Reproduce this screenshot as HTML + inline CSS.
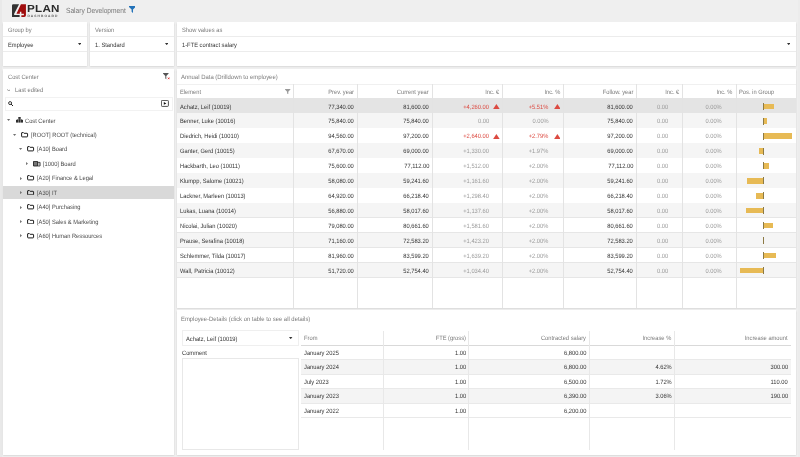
<!DOCTYPE html>
<html lang="en"><head><meta charset="utf-8"><title>Salary Development</title>
<style>
html,body{margin:0;padding:0;}
body{width:800px;height:457px;overflow:hidden;background:#efefef;position:relative;font-family:"Liberation Sans",sans-serif;}
#w{position:absolute;left:0;top:0;width:800px;height:457px;will-change:transform;}
#w>div,#w>svg{position:absolute;display:block;}
.t{white-space:nowrap;letter-spacing:0px;text-rendering:geometricPrecision;}
.panel{background:#fff;box-shadow:0 0.6px 1.6px rgba(0,0,0,0.16);}
</style></head><body><div id="w">
<div style="left:0px;top:0px;width:1.5px;height:457px;background:#e9e9e9"></div>
<svg style="left:12.2px;top:3.86px" width="13.94" height="13.2" viewBox="0 0 375 355"><path d="M0 350 V40 Q0 5 35 5 H190 L58 265 V295 H205 V350 Z" fill="#333"/><path d="M240 5 H375 V300 Q375 350 325 350 H252 V300 H320 V265 H252 V210 H212 V262 H120 Z" fill="#a00d0d"/></svg>
<div class="t" style="top:4.7px;height:10px;line-height:10px;font-size:10.3px;color:#2b2b2b;letter-spacing:0.25px;left:27.1px;transform:scaleX(1.13);transform-origin:0 50%;font-weight:bold;">PLAN</div>
<div class="t" style="top:11.1px;height:10px;line-height:10px;font-size:3.3px;color:#555;letter-spacing:1.06px;left:27.4px;font-weight:bold;">DASHBOARD</div>
<div class="t" style="top:6px;height:10px;line-height:10px;font-size:7.5px;color:#777;left:65.5px;transform:scaleX(0.885);transform-origin:0 50%;">Salary Development</div>
<svg style="left:128.5px;top:6.2px" width="6.6" height="6.9" viewBox="0 0 66 69"><path d="M0 0 H66 V9 L40 36 V69 L26 58 V36 L0 9 Z" fill="#2272b9"/></svg>
<div class="panel" style="left:3.2px;top:22px;width:84px;height:44px;"></div>
<div style="left:3.2px;top:36.3px;width:84px;height:0.7px;background:#ececec"></div>
<div style="left:3.2px;top:51px;width:84px;height:0.7px;background:#ececec"></div>
<div class="t" style="top:26px;height:10px;line-height:10px;font-size:6.25px;color:#7a7a7a;left:7.8px;transform:scaleX(0.92);transform-origin:0 50%;">Group by</div>
<div class="t" style="top:41px;height:10px;line-height:10px;font-size:6.25px;color:#333;left:7.8px;transform:scaleX(0.92);transform-origin:0 50%;">Employee</div>
<svg style="left:77.9px;top:43px" width="3.4" height="2.2" viewBox="0 0 34 22"><path d="M0 0 H34 L17 22 Z" fill="#333"/></svg>
<div class="panel" style="left:90px;top:22px;width:84px;height:44px;"></div>
<div style="left:90px;top:36.3px;width:84px;height:0.7px;background:#ececec"></div>
<div style="left:90px;top:51px;width:84px;height:0.7px;background:#ececec"></div>
<div class="t" style="top:26px;height:10px;line-height:10px;font-size:6.25px;color:#7a7a7a;left:94.6px;transform:scaleX(0.92);transform-origin:0 50%;">Version</div>
<div class="t" style="top:41px;height:10px;line-height:10px;font-size:6.25px;color:#333;left:94.6px;transform:scaleX(0.92);transform-origin:0 50%;">1. Standard</div>
<svg style="left:164.9px;top:43px" width="3.4" height="2.2" viewBox="0 0 34 22"><path d="M0 0 H34 L17 22 Z" fill="#333"/></svg>
<div class="panel" style="left:177px;top:22px;width:618.7px;height:44px;"></div>
<div style="left:177px;top:36.3px;width:618.7px;height:0.7px;background:#ececec"></div>
<div style="left:177px;top:51px;width:618.7px;height:0.7px;background:#ececec"></div>
<div class="t" style="top:26px;height:10px;line-height:10px;font-size:6.25px;color:#7a7a7a;left:181.6px;transform:scaleX(0.92);transform-origin:0 50%;">Show values as</div>
<div class="t" style="top:41px;height:10px;line-height:10px;font-size:6.25px;color:#333;left:181.6px;transform:scaleX(0.92);transform-origin:0 50%;">1-FTE contract salary</div>
<svg style="left:786.5px;top:43px" width="3.4" height="2.2" viewBox="0 0 34 22"><path d="M0 0 H34 L17 22 Z" fill="#333"/></svg>
<div class="panel" style="left:3.2px;top:69px;width:171.2px;height:386.3px;"></div>
<div class="t" style="top:73px;height:10px;line-height:10px;font-size:6.25px;color:#7a7a7a;left:7.8px;transform:scaleX(0.92);transform-origin:0 50%;">Cost Center</div>
<svg style="left:163px;top:73.3px" width="7" height="6.6" viewBox="0 0 70 66"><path d="M0 0 H56 V6 L33 30 V62 L23 56 V30 L0 6 Z" fill="#555"/><path d="M50 46 L64 62 M64 46 L50 62" stroke="#e02020" stroke-width="8" fill="none"/></svg>
<svg style="left:6.9px;top:88.6px" width="3.6" height="2.5" viewBox="0 0 36 25"><path d="M2 3 L18 21 L34 3" stroke="#666" stroke-width="6.5" fill="none"/></svg>
<div class="t" style="top:86px;height:10px;line-height:10px;font-size:6.25px;color:#7a7a7a;left:14.8px;transform:scaleX(0.92);transform-origin:0 50%;">Last edited</div>
<div style="left:5px;top:96.6px;width:167.8px;height:14.5px;background:#fff;border:0.6px solid #f2f2f2;box-sizing:border-box;"></div>
<svg style="left:7.7px;top:101px" width="5.6" height="5.6" viewBox="0 0 56 56"><circle cx="21" cy="21" r="15" stroke="#222" stroke-width="9" fill="none"/><path d="M32 32 L51 51" stroke="#222" stroke-width="10" stroke-linecap="round"/></svg>
<svg style="left:161.2px;top:100.1px" width="7.8" height="6.8" viewBox="0 0 78 68"><rect x="4" y="4" width="70" height="60" rx="8" stroke="#222" stroke-width="8" fill="none"/><path d="M28 20 L54 34 L28 48 Z" fill="#111"/></svg>
<svg style="left:7.4px;top:119.4px" width="3.2" height="2" viewBox="0 0 32 20"><path d="M0 0 H32 L16 20 Z" fill="#707070"/></svg>
<svg style="left:15.7px;top:117.4px" width="7" height="5.6" viewBox="0 0 55 44"><rect x="18" y="0" width="19" height="15" fill="#2e2e2e"/><rect x="24.5" y="15" width="6" height="8" fill="#2e2e2e"/><rect x="6" y="19" width="43" height="5" fill="#2e2e2e"/><rect x="0" y="23" width="17" height="21" fill="#2e2e2e"/><rect x="19" y="23" width="17" height="21" fill="#2e2e2e"/><rect x="38" y="23" width="17" height="21" fill="#2e2e2e"/></svg>
<div class="t" style="top:117px;height:10px;line-height:10px;font-size:6.25px;color:#4a4a4a;left:25px;transform:scaleX(0.915);transform-origin:0 50%;">Cost Center</div>
<svg style="left:13.4px;top:133.87px" width="3.2" height="2" viewBox="0 0 32 20"><path d="M0 0 H32 L16 20 Z" fill="#707070"/></svg>
<svg style="left:21.35px;top:132.02px" width="7.2" height="5.5" viewBox="0 0 72 55"><path d="M10 6 H24 L31 13 H60 Q66 13 66 19 V43 Q66 49 60 49 H12 Q6 49 6 43 V10 Q6 6 10 6 Z" stroke="#1c1c1c" stroke-width="10" fill="none" stroke-linejoin="round"/></svg>
<div class="t" style="top:131px;height:10px;line-height:10px;font-size:6.25px;color:#4a4a4a;left:31px;transform:scaleX(0.915);transform-origin:0 50%;">[ROOT] ROOT (technical)</div>
<svg style="left:19.4px;top:148.34px" width="3.2" height="2" viewBox="0 0 32 20"><path d="M0 0 H32 L16 20 Z" fill="#707070"/></svg>
<svg style="left:27.35px;top:146.49px" width="7.2" height="5.5" viewBox="0 0 72 55"><path d="M10 6 H24 L31 13 H60 Q66 13 66 19 V43 Q66 49 60 49 H12 Q6 49 6 43 V10 Q6 6 10 6 Z" stroke="#1c1c1c" stroke-width="10" fill="none" stroke-linejoin="round"/></svg>
<div class="t" style="top:145px;height:10px;line-height:10px;font-size:6.25px;color:#4a4a4a;left:37px;transform:scaleX(0.915);transform-origin:0 50%;">[A10] Board</div>
<svg style="left:26.4px;top:162.11px" width="2" height="3.2" viewBox="0 0 20 32"><path d="M0 0 V32 L20 16 Z" fill="#777"/></svg>
<svg style="left:33.2px;top:160.81px" width="7.7" height="5.8" viewBox="0 0 77 58"><path d="M5 4 H46 V50 H5 Z" stroke="#222" stroke-width="9" fill="#777" stroke-linejoin="round"/><path d="M46 14 H71 V50 H46" stroke="#222" stroke-width="8" fill="none" stroke-linejoin="round"/><path d="M54 26 H66 M54 38 H66" stroke="#222" stroke-width="5"/></svg>
<div class="t" style="top:160px;height:10px;line-height:10px;font-size:6.25px;color:#4a4a4a;left:43px;transform:scaleX(0.915);transform-origin:0 50%;">[1000] Board</div>
<svg style="left:20.4px;top:176.58px" width="2" height="3.2" viewBox="0 0 20 32"><path d="M0 0 V32 L20 16 Z" fill="#777"/></svg>
<svg style="left:27.35px;top:175.43px" width="7.2" height="5.5" viewBox="0 0 72 55"><path d="M10 6 H24 L31 13 H60 Q66 13 66 19 V43 Q66 49 60 49 H12 Q6 49 6 43 V10 Q6 6 10 6 Z" stroke="#1c1c1c" stroke-width="10" fill="none" stroke-linejoin="round"/></svg>
<div class="t" style="top:174px;height:10px;line-height:10px;font-size:6.25px;color:#4a4a4a;left:37px;transform:scaleX(0.915);transform-origin:0 50%;">[A20] Finance &amp; Legal</div>
<div style="left:3.2px;top:185.75px;width:171.2px;height:13.6px;background:#d9d9d9"></div>
<svg style="left:20.4px;top:191.05px" width="2" height="3.2" viewBox="0 0 20 32"><path d="M0 0 V32 L20 16 Z" fill="#777"/></svg>
<svg style="left:27.35px;top:189.9px" width="7.2" height="5.5" viewBox="0 0 72 55"><path d="M10 6 H24 L31 13 H60 Q66 13 66 19 V43 Q66 49 60 49 H12 Q6 49 6 43 V10 Q6 6 10 6 Z" stroke="#1c1c1c" stroke-width="10" fill="none" stroke-linejoin="round"/></svg>
<div class="t" style="top:189px;height:10px;line-height:10px;font-size:6.25px;color:#4a4a4a;left:37px;transform:scaleX(0.915);transform-origin:0 50%;">[A30] IT</div>
<svg style="left:20.4px;top:205.52px" width="2" height="3.2" viewBox="0 0 20 32"><path d="M0 0 V32 L20 16 Z" fill="#777"/></svg>
<svg style="left:27.35px;top:204.37px" width="7.2" height="5.5" viewBox="0 0 72 55"><path d="M10 6 H24 L31 13 H60 Q66 13 66 19 V43 Q66 49 60 49 H12 Q6 49 6 43 V10 Q6 6 10 6 Z" stroke="#1c1c1c" stroke-width="10" fill="none" stroke-linejoin="round"/></svg>
<div class="t" style="top:203px;height:10px;line-height:10px;font-size:6.25px;color:#4a4a4a;left:37px;transform:scaleX(0.915);transform-origin:0 50%;">[A40] Purchasing</div>
<svg style="left:20.4px;top:219.99px" width="2" height="3.2" viewBox="0 0 20 32"><path d="M0 0 V32 L20 16 Z" fill="#777"/></svg>
<svg style="left:27.35px;top:218.84px" width="7.2" height="5.5" viewBox="0 0 72 55"><path d="M10 6 H24 L31 13 H60 Q66 13 66 19 V43 Q66 49 60 49 H12 Q6 49 6 43 V10 Q6 6 10 6 Z" stroke="#1c1c1c" stroke-width="10" fill="none" stroke-linejoin="round"/></svg>
<div class="t" style="top:218px;height:10px;line-height:10px;font-size:6.25px;color:#4a4a4a;left:37px;transform:scaleX(0.915);transform-origin:0 50%;">[A50] Sales &amp; Marketing</div>
<svg style="left:20.4px;top:234.46px" width="2" height="3.2" viewBox="0 0 20 32"><path d="M0 0 V32 L20 16 Z" fill="#777"/></svg>
<svg style="left:27.35px;top:233.31px" width="7.2" height="5.5" viewBox="0 0 72 55"><path d="M10 6 H24 L31 13 H60 Q66 13 66 19 V43 Q66 49 60 49 H12 Q6 49 6 43 V10 Q6 6 10 6 Z" stroke="#1c1c1c" stroke-width="10" fill="none" stroke-linejoin="round"/></svg>
<div class="t" style="top:232px;height:10px;line-height:10px;font-size:6.25px;color:#4a4a4a;left:37px;transform:scaleX(0.915);transform-origin:0 50%;">[A60] Human Ressources</div>
<div class="panel" style="left:177px;top:69px;width:618.7px;height:239px;"></div>
<div class="t" style="top:73px;height:10px;line-height:10px;font-size:6.25px;color:#7a7a7a;left:181px;transform:scaleX(0.95);transform-origin:0 50%;">Annual Data (Drilldown to employee)</div>
<div style="left:177px;top:83.5px;width:618.7px;height:0.6px;background:#f0f0f0"></div>
<div style="left:177px;top:97.6px;width:618.7px;height:0.8px;background:#dcdcdc"></div>
<div style="left:177px;top:98.1px;width:618.7px;height:15.225px;background:#e4e4e4"></div>
<div style="left:177px;top:112.975px;width:618.7px;height:0.7px;background:#e6e6e6"></div>
<div style="left:177px;top:113.325px;width:618.7px;height:14.925px;background:#f5f5f5"></div>
<div style="left:177px;top:127.9px;width:618.7px;height:0.7px;background:#e6e6e6"></div>
<div style="left:177px;top:128.25px;width:618.7px;height:14.925px;background:#fff"></div>
<div style="left:177px;top:142.825px;width:618.7px;height:0.7px;background:#e6e6e6"></div>
<div style="left:177px;top:143.175px;width:618.7px;height:14.925px;background:#f5f5f5"></div>
<div style="left:177px;top:157.75px;width:618.7px;height:0.7px;background:#e6e6e6"></div>
<div style="left:177px;top:158.1px;width:618.7px;height:14.925px;background:#fff"></div>
<div style="left:177px;top:172.675px;width:618.7px;height:0.7px;background:#e6e6e6"></div>
<div style="left:177px;top:173.025px;width:618.7px;height:14.925px;background:#f5f5f5"></div>
<div style="left:177px;top:187.6px;width:618.7px;height:0.7px;background:#e6e6e6"></div>
<div style="left:177px;top:187.95px;width:618.7px;height:14.925px;background:#fff"></div>
<div style="left:177px;top:202.525px;width:618.7px;height:0.7px;background:#e6e6e6"></div>
<div style="left:177px;top:202.875px;width:618.7px;height:14.925px;background:#f5f5f5"></div>
<div style="left:177px;top:217.45px;width:618.7px;height:0.7px;background:#e6e6e6"></div>
<div style="left:177px;top:217.8px;width:618.7px;height:14.925px;background:#fff"></div>
<div style="left:177px;top:232.375px;width:618.7px;height:0.7px;background:#e6e6e6"></div>
<div style="left:177px;top:232.725px;width:618.7px;height:14.925px;background:#f5f5f5"></div>
<div style="left:177px;top:247.3px;width:618.7px;height:0.7px;background:#e6e6e6"></div>
<div style="left:177px;top:247.65px;width:618.7px;height:14.925px;background:#fff"></div>
<div style="left:177px;top:262.225px;width:618.7px;height:0.7px;background:#e6e6e6"></div>
<div style="left:177px;top:262.575px;width:618.7px;height:14.925px;background:#f5f5f5"></div>
<div style="left:177px;top:277.15px;width:618.7px;height:0.7px;background:#e6e6e6"></div>
<div style="left:293.15px;top:83.5px;width:0.7px;height:224.5px;background:#e3e3e3"></div>
<div style="left:357.15px;top:83.5px;width:0.7px;height:224.5px;background:#e3e3e3"></div>
<div style="left:432.15px;top:83.5px;width:0.7px;height:224.5px;background:#e3e3e3"></div>
<div style="left:502.15px;top:83.5px;width:0.7px;height:224.5px;background:#e3e3e3"></div>
<div style="left:563.15px;top:83.5px;width:0.7px;height:224.5px;background:#e3e3e3"></div>
<div style="left:636.15px;top:83.5px;width:0.7px;height:224.5px;background:#e3e3e3"></div>
<div style="left:682.15px;top:83.5px;width:0.7px;height:224.5px;background:#e3e3e3"></div>
<div style="left:735.65px;top:83.5px;width:0.7px;height:224.5px;background:#e3e3e3"></div>
<div class="t" style="top:88px;height:10px;line-height:10px;font-size:6.25px;color:#7a7a7a;left:180.2px;transform:scaleX(0.92);transform-origin:0 50%;">Element</div>
<svg style="left:285.4px;top:88.9px" width="5.4" height="5.2" viewBox="0 0 54 52"><path d="M0 0 H54 V6 L33 28 V52 L21 44 V28 L0 6 Z" fill="#999"/></svg>
<div class="t" style="top:88px;height:10px;line-height:10px;font-size:6.25px;color:#7a7a7a;right:446px;text-align:right;transform:scaleX(0.92);transform-origin:100% 50%;">Prev. year</div>
<div class="t" style="top:88px;height:10px;line-height:10px;font-size:6.25px;color:#7a7a7a;right:371px;text-align:right;transform:scaleX(0.92);transform-origin:100% 50%;">Current year</div>
<div class="t" style="top:88px;height:10px;line-height:10px;font-size:6.25px;color:#7a7a7a;right:300.7px;text-align:right;transform:scaleX(0.92);transform-origin:100% 50%;">Inc. €</div>
<div class="t" style="top:88px;height:10px;line-height:10px;font-size:6.25px;color:#7a7a7a;right:240px;text-align:right;transform:scaleX(0.92);transform-origin:100% 50%;">Inc. %</div>
<div class="t" style="top:88px;height:10px;line-height:10px;font-size:6.25px;color:#7a7a7a;right:167px;text-align:right;transform:scaleX(0.92);transform-origin:100% 50%;">Follow. year</div>
<div class="t" style="top:88px;height:10px;line-height:10px;font-size:6.25px;color:#7a7a7a;right:121px;text-align:right;transform:scaleX(0.92);transform-origin:100% 50%;">Inc. €</div>
<div class="t" style="top:88px;height:10px;line-height:10px;font-size:6.25px;color:#7a7a7a;right:67.5px;text-align:right;transform:scaleX(0.92);transform-origin:100% 50%;">Inc. %</div>
<div class="t" style="top:88px;height:10px;line-height:10px;font-size:6.25px;color:#7a7a7a;left:739px;transform:scaleX(0.92);transform-origin:0 50%;">Pos. in Group</div>
<div class="t" style="top:103px;height:10px;line-height:10px;font-size:6.25px;color:#333;left:180.2px;transform:scaleX(0.92);transform-origin:0 50%;">Achatz, Leif (10019)</div>
<div class="t" style="top:103px;height:10px;line-height:10px;font-size:6.25px;color:#333;right:446px;text-align:right;transform:scaleX(0.92);transform-origin:100% 50%;">77,340.00</div>
<div class="t" style="top:103px;height:10px;line-height:10px;font-size:6.25px;color:#333;right:371px;text-align:right;transform:scaleX(0.92);transform-origin:100% 50%;">81,600.00</div>
<div class="t" style="top:103px;height:10px;line-height:10px;font-size:6.25px;color:#dc4a41;right:311.2px;text-align:right;transform:scaleX(0.92);transform-origin:100% 50%;">+4,260.00</div>
<div class="t" style="top:103px;height:10px;line-height:10px;font-size:6.25px;color:#dc4a41;right:251.2px;text-align:right;transform:scaleX(0.92);transform-origin:100% 50%;">+5.51%</div>
<svg style="left:492.9px;top:103.663px" width="6.8" height="5.2" viewBox="0 0 68 52"><path d="M34 0 L68 52 H0 Z" fill="#dc4a41"/></svg>
<svg style="left:553.7px;top:103.663px" width="6.8" height="5.2" viewBox="0 0 68 52"><path d="M34 0 L68 52 H0 Z" fill="#dc4a41"/></svg>
<div class="t" style="top:103px;height:10px;line-height:10px;font-size:6.25px;color:#333;right:167px;text-align:right;transform:scaleX(0.92);transform-origin:100% 50%;">81,600.00</div>
<div class="t" style="top:103px;height:10px;line-height:10px;font-size:6.25px;color:#9a9a9a;right:132.2px;text-align:right;transform:scaleX(0.92);transform-origin:100% 50%;">0.00</div>
<div class="t" style="top:103px;height:10px;line-height:10px;font-size:6.25px;color:#9a9a9a;right:78.2px;text-align:right;transform:scaleX(0.92);transform-origin:100% 50%;">0.00%</div>
<div style="left:763.4px;top:103.563px;width:10.3px;height:5.4px;background:#e7ba55"></div>
<div style="left:763px;top:102.763px;width:0.8px;height:7px;background:#8c7a45"></div>
<div class="t" style="top:117px;height:10px;line-height:10px;font-size:6.25px;color:#333;left:180.2px;transform:scaleX(0.92);transform-origin:0 50%;">Benner, Luke (10016)</div>
<div class="t" style="top:117px;height:10px;line-height:10px;font-size:6.25px;color:#333;right:446px;text-align:right;transform:scaleX(0.92);transform-origin:100% 50%;">75,840.00</div>
<div class="t" style="top:117px;height:10px;line-height:10px;font-size:6.25px;color:#333;right:371px;text-align:right;transform:scaleX(0.92);transform-origin:100% 50%;">75,840.00</div>
<div class="t" style="top:117px;height:10px;line-height:10px;font-size:6.25px;color:#9a9a9a;right:311.2px;text-align:right;transform:scaleX(0.92);transform-origin:100% 50%;">0.00</div>
<div class="t" style="top:117px;height:10px;line-height:10px;font-size:6.25px;color:#9a9a9a;right:251.2px;text-align:right;transform:scaleX(0.92);transform-origin:100% 50%;">0.00%</div>
<div class="t" style="top:117px;height:10px;line-height:10px;font-size:6.25px;color:#333;right:167px;text-align:right;transform:scaleX(0.92);transform-origin:100% 50%;">75,840.00</div>
<div class="t" style="top:117px;height:10px;line-height:10px;font-size:6.25px;color:#9a9a9a;right:132.2px;text-align:right;transform:scaleX(0.92);transform-origin:100% 50%;">0.00</div>
<div class="t" style="top:117px;height:10px;line-height:10px;font-size:6.25px;color:#9a9a9a;right:78.2px;text-align:right;transform:scaleX(0.92);transform-origin:100% 50%;">0.00%</div>
<div style="left:763.4px;top:118.488px;width:3.8px;height:5.4px;background:#e7ba55"></div>
<div style="left:763px;top:117.688px;width:0.8px;height:7px;background:#8c7a45"></div>
<div class="t" style="top:132px;height:10px;line-height:10px;font-size:6.25px;color:#333;left:180.2px;transform:scaleX(0.92);transform-origin:0 50%;">Diedrich, Heidi (10010)</div>
<div class="t" style="top:132px;height:10px;line-height:10px;font-size:6.25px;color:#333;right:446px;text-align:right;transform:scaleX(0.92);transform-origin:100% 50%;">94,560.00</div>
<div class="t" style="top:132px;height:10px;line-height:10px;font-size:6.25px;color:#333;right:371px;text-align:right;transform:scaleX(0.92);transform-origin:100% 50%;">97,200.00</div>
<div class="t" style="top:132px;height:10px;line-height:10px;font-size:6.25px;color:#dc4a41;right:311.2px;text-align:right;transform:scaleX(0.92);transform-origin:100% 50%;">+2,640.00</div>
<div class="t" style="top:132px;height:10px;line-height:10px;font-size:6.25px;color:#dc4a41;right:251.2px;text-align:right;transform:scaleX(0.92);transform-origin:100% 50%;">+2.79%</div>
<svg style="left:492.9px;top:133.513px" width="6.8" height="5.2" viewBox="0 0 68 52"><path d="M34 0 L68 52 H0 Z" fill="#dc4a41"/></svg>
<svg style="left:553.7px;top:133.513px" width="6.8" height="5.2" viewBox="0 0 68 52"><path d="M34 0 L68 52 H0 Z" fill="#dc4a41"/></svg>
<div class="t" style="top:132px;height:10px;line-height:10px;font-size:6.25px;color:#333;right:167px;text-align:right;transform:scaleX(0.92);transform-origin:100% 50%;">97,200.00</div>
<div class="t" style="top:132px;height:10px;line-height:10px;font-size:6.25px;color:#9a9a9a;right:132.2px;text-align:right;transform:scaleX(0.92);transform-origin:100% 50%;">0.00</div>
<div class="t" style="top:132px;height:10px;line-height:10px;font-size:6.25px;color:#9a9a9a;right:78.2px;text-align:right;transform:scaleX(0.92);transform-origin:100% 50%;">0.00%</div>
<div style="left:763.4px;top:133.413px;width:28.8px;height:5.4px;background:#e7ba55"></div>
<div style="left:763px;top:132.613px;width:0.8px;height:7px;background:#8c7a45"></div>
<div class="t" style="top:147px;height:10px;line-height:10px;font-size:6.25px;color:#333;left:180.2px;transform:scaleX(0.92);transform-origin:0 50%;">Ganter, Gerd (10015)</div>
<div class="t" style="top:147px;height:10px;line-height:10px;font-size:6.25px;color:#333;right:446px;text-align:right;transform:scaleX(0.92);transform-origin:100% 50%;">67,670.00</div>
<div class="t" style="top:147px;height:10px;line-height:10px;font-size:6.25px;color:#333;right:371px;text-align:right;transform:scaleX(0.92);transform-origin:100% 50%;">69,000.00</div>
<div class="t" style="top:147px;height:10px;line-height:10px;font-size:6.25px;color:#9a9a9a;right:311.2px;text-align:right;transform:scaleX(0.92);transform-origin:100% 50%;">+1,330.00</div>
<div class="t" style="top:147px;height:10px;line-height:10px;font-size:6.25px;color:#9a9a9a;right:251.2px;text-align:right;transform:scaleX(0.92);transform-origin:100% 50%;">+1.97%</div>
<div class="t" style="top:147px;height:10px;line-height:10px;font-size:6.25px;color:#333;right:167px;text-align:right;transform:scaleX(0.92);transform-origin:100% 50%;">69,000.00</div>
<div class="t" style="top:147px;height:10px;line-height:10px;font-size:6.25px;color:#9a9a9a;right:132.2px;text-align:right;transform:scaleX(0.92);transform-origin:100% 50%;">0.00</div>
<div class="t" style="top:147px;height:10px;line-height:10px;font-size:6.25px;color:#9a9a9a;right:78.2px;text-align:right;transform:scaleX(0.92);transform-origin:100% 50%;">0.00%</div>
<div style="left:758.8px;top:148.338px;width:4.6px;height:5.4px;background:#e7ba55"></div>
<div style="left:763px;top:147.538px;width:0.8px;height:7px;background:#8c7a45"></div>
<div class="t" style="top:162px;height:10px;line-height:10px;font-size:6.25px;color:#333;left:180.2px;transform:scaleX(0.92);transform-origin:0 50%;">Hackbarth, Leo (10011)</div>
<div class="t" style="top:162px;height:10px;line-height:10px;font-size:6.25px;color:#333;right:446px;text-align:right;transform:scaleX(0.92);transform-origin:100% 50%;">75,600.00</div>
<div class="t" style="top:162px;height:10px;line-height:10px;font-size:6.25px;color:#333;right:371px;text-align:right;transform:scaleX(0.92);transform-origin:100% 50%;">77,112.00</div>
<div class="t" style="top:162px;height:10px;line-height:10px;font-size:6.25px;color:#9a9a9a;right:311.2px;text-align:right;transform:scaleX(0.92);transform-origin:100% 50%;">+1,512.00</div>
<div class="t" style="top:162px;height:10px;line-height:10px;font-size:6.25px;color:#9a9a9a;right:251.2px;text-align:right;transform:scaleX(0.92);transform-origin:100% 50%;">+2.00%</div>
<div class="t" style="top:162px;height:10px;line-height:10px;font-size:6.25px;color:#333;right:167px;text-align:right;transform:scaleX(0.92);transform-origin:100% 50%;">77,112.00</div>
<div class="t" style="top:162px;height:10px;line-height:10px;font-size:6.25px;color:#9a9a9a;right:132.2px;text-align:right;transform:scaleX(0.92);transform-origin:100% 50%;">0.00</div>
<div class="t" style="top:162px;height:10px;line-height:10px;font-size:6.25px;color:#9a9a9a;right:78.2px;text-align:right;transform:scaleX(0.92);transform-origin:100% 50%;">0.00%</div>
<div style="left:763.4px;top:163.263px;width:5.3px;height:5.4px;background:#e7ba55"></div>
<div style="left:763px;top:162.463px;width:0.8px;height:7px;background:#8c7a45"></div>
<div class="t" style="top:177px;height:10px;line-height:10px;font-size:6.25px;color:#333;left:180.2px;transform:scaleX(0.92);transform-origin:0 50%;">Klumpp, Salome (10021)</div>
<div class="t" style="top:177px;height:10px;line-height:10px;font-size:6.25px;color:#333;right:446px;text-align:right;transform:scaleX(0.92);transform-origin:100% 50%;">58,080.00</div>
<div class="t" style="top:177px;height:10px;line-height:10px;font-size:6.25px;color:#333;right:371px;text-align:right;transform:scaleX(0.92);transform-origin:100% 50%;">59,241.60</div>
<div class="t" style="top:177px;height:10px;line-height:10px;font-size:6.25px;color:#9a9a9a;right:311.2px;text-align:right;transform:scaleX(0.92);transform-origin:100% 50%;">+1,161.60</div>
<div class="t" style="top:177px;height:10px;line-height:10px;font-size:6.25px;color:#9a9a9a;right:251.2px;text-align:right;transform:scaleX(0.92);transform-origin:100% 50%;">+2.00%</div>
<div class="t" style="top:177px;height:10px;line-height:10px;font-size:6.25px;color:#333;right:167px;text-align:right;transform:scaleX(0.92);transform-origin:100% 50%;">59,241.60</div>
<div class="t" style="top:177px;height:10px;line-height:10px;font-size:6.25px;color:#9a9a9a;right:132.2px;text-align:right;transform:scaleX(0.92);transform-origin:100% 50%;">0.00</div>
<div class="t" style="top:177px;height:10px;line-height:10px;font-size:6.25px;color:#9a9a9a;right:78.2px;text-align:right;transform:scaleX(0.92);transform-origin:100% 50%;">0.00%</div>
<div style="left:747.2px;top:178.188px;width:16.2px;height:5.4px;background:#e7ba55"></div>
<div style="left:763px;top:177.388px;width:0.8px;height:7px;background:#8c7a45"></div>
<div class="t" style="top:192px;height:10px;line-height:10px;font-size:6.25px;color:#333;left:180.2px;transform:scaleX(0.92);transform-origin:0 50%;">Lackner, Marleen (10013)</div>
<div class="t" style="top:192px;height:10px;line-height:10px;font-size:6.25px;color:#333;right:446px;text-align:right;transform:scaleX(0.92);transform-origin:100% 50%;">64,920.00</div>
<div class="t" style="top:192px;height:10px;line-height:10px;font-size:6.25px;color:#333;right:371px;text-align:right;transform:scaleX(0.92);transform-origin:100% 50%;">66,218.40</div>
<div class="t" style="top:192px;height:10px;line-height:10px;font-size:6.25px;color:#9a9a9a;right:311.2px;text-align:right;transform:scaleX(0.92);transform-origin:100% 50%;">+1,298.40</div>
<div class="t" style="top:192px;height:10px;line-height:10px;font-size:6.25px;color:#9a9a9a;right:251.2px;text-align:right;transform:scaleX(0.92);transform-origin:100% 50%;">+2.00%</div>
<div class="t" style="top:192px;height:10px;line-height:10px;font-size:6.25px;color:#333;right:167px;text-align:right;transform:scaleX(0.92);transform-origin:100% 50%;">66,218.40</div>
<div class="t" style="top:192px;height:10px;line-height:10px;font-size:6.25px;color:#9a9a9a;right:132.2px;text-align:right;transform:scaleX(0.92);transform-origin:100% 50%;">0.00</div>
<div class="t" style="top:192px;height:10px;line-height:10px;font-size:6.25px;color:#9a9a9a;right:78.2px;text-align:right;transform:scaleX(0.92);transform-origin:100% 50%;">0.00%</div>
<div style="left:755.9px;top:193.113px;width:7.5px;height:5.4px;background:#e7ba55"></div>
<div style="left:763px;top:192.313px;width:0.8px;height:7px;background:#8c7a45"></div>
<div class="t" style="top:207px;height:10px;line-height:10px;font-size:6.25px;color:#333;left:180.2px;transform:scaleX(0.92);transform-origin:0 50%;">Lukas, Luana (10014)</div>
<div class="t" style="top:207px;height:10px;line-height:10px;font-size:6.25px;color:#333;right:446px;text-align:right;transform:scaleX(0.92);transform-origin:100% 50%;">56,880.00</div>
<div class="t" style="top:207px;height:10px;line-height:10px;font-size:6.25px;color:#333;right:371px;text-align:right;transform:scaleX(0.92);transform-origin:100% 50%;">58,017.60</div>
<div class="t" style="top:207px;height:10px;line-height:10px;font-size:6.25px;color:#9a9a9a;right:311.2px;text-align:right;transform:scaleX(0.92);transform-origin:100% 50%;">+1,137.60</div>
<div class="t" style="top:207px;height:10px;line-height:10px;font-size:6.25px;color:#9a9a9a;right:251.2px;text-align:right;transform:scaleX(0.92);transform-origin:100% 50%;">+2.00%</div>
<div class="t" style="top:207px;height:10px;line-height:10px;font-size:6.25px;color:#333;right:167px;text-align:right;transform:scaleX(0.92);transform-origin:100% 50%;">58,017.60</div>
<div class="t" style="top:207px;height:10px;line-height:10px;font-size:6.25px;color:#9a9a9a;right:132.2px;text-align:right;transform:scaleX(0.92);transform-origin:100% 50%;">0.00</div>
<div class="t" style="top:207px;height:10px;line-height:10px;font-size:6.25px;color:#9a9a9a;right:78.2px;text-align:right;transform:scaleX(0.92);transform-origin:100% 50%;">0.00%</div>
<div style="left:746px;top:208.038px;width:17.4px;height:5.4px;background:#e7ba55"></div>
<div style="left:763px;top:207.238px;width:0.8px;height:7px;background:#8c7a45"></div>
<div class="t" style="top:222px;height:10px;line-height:10px;font-size:6.25px;color:#333;left:180.2px;transform:scaleX(0.92);transform-origin:0 50%;">Nicolai, Julian (10020)</div>
<div class="t" style="top:222px;height:10px;line-height:10px;font-size:6.25px;color:#333;right:446px;text-align:right;transform:scaleX(0.92);transform-origin:100% 50%;">79,080.00</div>
<div class="t" style="top:222px;height:10px;line-height:10px;font-size:6.25px;color:#333;right:371px;text-align:right;transform:scaleX(0.92);transform-origin:100% 50%;">80,661.60</div>
<div class="t" style="top:222px;height:10px;line-height:10px;font-size:6.25px;color:#9a9a9a;right:311.2px;text-align:right;transform:scaleX(0.92);transform-origin:100% 50%;">+1,581.60</div>
<div class="t" style="top:222px;height:10px;line-height:10px;font-size:6.25px;color:#9a9a9a;right:251.2px;text-align:right;transform:scaleX(0.92);transform-origin:100% 50%;">+2.00%</div>
<div class="t" style="top:222px;height:10px;line-height:10px;font-size:6.25px;color:#333;right:167px;text-align:right;transform:scaleX(0.92);transform-origin:100% 50%;">80,661.60</div>
<div class="t" style="top:222px;height:10px;line-height:10px;font-size:6.25px;color:#9a9a9a;right:132.2px;text-align:right;transform:scaleX(0.92);transform-origin:100% 50%;">0.00</div>
<div class="t" style="top:222px;height:10px;line-height:10px;font-size:6.25px;color:#9a9a9a;right:78.2px;text-align:right;transform:scaleX(0.92);transform-origin:100% 50%;">0.00%</div>
<div style="left:763.4px;top:222.963px;width:9.6px;height:5.4px;background:#e7ba55"></div>
<div style="left:763px;top:222.163px;width:0.8px;height:7px;background:#8c7a45"></div>
<div class="t" style="top:237px;height:10px;line-height:10px;font-size:6.25px;color:#333;left:180.2px;transform:scaleX(0.92);transform-origin:0 50%;">Prause, Serafina (10018)</div>
<div class="t" style="top:237px;height:10px;line-height:10px;font-size:6.25px;color:#333;right:446px;text-align:right;transform:scaleX(0.92);transform-origin:100% 50%;">71,160.00</div>
<div class="t" style="top:237px;height:10px;line-height:10px;font-size:6.25px;color:#333;right:371px;text-align:right;transform:scaleX(0.92);transform-origin:100% 50%;">72,583.20</div>
<div class="t" style="top:237px;height:10px;line-height:10px;font-size:6.25px;color:#9a9a9a;right:311.2px;text-align:right;transform:scaleX(0.92);transform-origin:100% 50%;">+1,423.20</div>
<div class="t" style="top:237px;height:10px;line-height:10px;font-size:6.25px;color:#9a9a9a;right:251.2px;text-align:right;transform:scaleX(0.92);transform-origin:100% 50%;">+2.00%</div>
<div class="t" style="top:237px;height:10px;line-height:10px;font-size:6.25px;color:#333;right:167px;text-align:right;transform:scaleX(0.92);transform-origin:100% 50%;">72,583.20</div>
<div class="t" style="top:237px;height:10px;line-height:10px;font-size:6.25px;color:#9a9a9a;right:132.2px;text-align:right;transform:scaleX(0.92);transform-origin:100% 50%;">0.00</div>
<div class="t" style="top:237px;height:10px;line-height:10px;font-size:6.25px;color:#9a9a9a;right:78.2px;text-align:right;transform:scaleX(0.92);transform-origin:100% 50%;">0.00%</div>
<div style="left:763px;top:237.088px;width:0.8px;height:7px;background:#8c7a45"></div>
<div class="t" style="top:252px;height:10px;line-height:10px;font-size:6.25px;color:#333;left:180.2px;transform:scaleX(0.92);transform-origin:0 50%;">Schlemmer, Tilda (10017)</div>
<div class="t" style="top:252px;height:10px;line-height:10px;font-size:6.25px;color:#333;right:446px;text-align:right;transform:scaleX(0.92);transform-origin:100% 50%;">81,960.00</div>
<div class="t" style="top:252px;height:10px;line-height:10px;font-size:6.25px;color:#333;right:371px;text-align:right;transform:scaleX(0.92);transform-origin:100% 50%;">83,599.20</div>
<div class="t" style="top:252px;height:10px;line-height:10px;font-size:6.25px;color:#9a9a9a;right:311.2px;text-align:right;transform:scaleX(0.92);transform-origin:100% 50%;">+1,639.20</div>
<div class="t" style="top:252px;height:10px;line-height:10px;font-size:6.25px;color:#9a9a9a;right:251.2px;text-align:right;transform:scaleX(0.92);transform-origin:100% 50%;">+2.00%</div>
<div class="t" style="top:252px;height:10px;line-height:10px;font-size:6.25px;color:#333;right:167px;text-align:right;transform:scaleX(0.92);transform-origin:100% 50%;">83,599.20</div>
<div class="t" style="top:252px;height:10px;line-height:10px;font-size:6.25px;color:#9a9a9a;right:132.2px;text-align:right;transform:scaleX(0.92);transform-origin:100% 50%;">0.00</div>
<div class="t" style="top:252px;height:10px;line-height:10px;font-size:6.25px;color:#9a9a9a;right:78.2px;text-align:right;transform:scaleX(0.92);transform-origin:100% 50%;">0.00%</div>
<div style="left:763.4px;top:252.813px;width:12.7px;height:5.4px;background:#e7ba55"></div>
<div style="left:763px;top:252.013px;width:0.8px;height:7px;background:#8c7a45"></div>
<div class="t" style="top:267px;height:10px;line-height:10px;font-size:6.25px;color:#333;left:180.2px;transform:scaleX(0.92);transform-origin:0 50%;">Wall, Patricia (10012)</div>
<div class="t" style="top:267px;height:10px;line-height:10px;font-size:6.25px;color:#333;right:446px;text-align:right;transform:scaleX(0.92);transform-origin:100% 50%;">51,720.00</div>
<div class="t" style="top:267px;height:10px;line-height:10px;font-size:6.25px;color:#333;right:371px;text-align:right;transform:scaleX(0.92);transform-origin:100% 50%;">52,754.40</div>
<div class="t" style="top:267px;height:10px;line-height:10px;font-size:6.25px;color:#9a9a9a;right:311.2px;text-align:right;transform:scaleX(0.92);transform-origin:100% 50%;">+1,034.40</div>
<div class="t" style="top:267px;height:10px;line-height:10px;font-size:6.25px;color:#9a9a9a;right:251.2px;text-align:right;transform:scaleX(0.92);transform-origin:100% 50%;">+2.00%</div>
<div class="t" style="top:267px;height:10px;line-height:10px;font-size:6.25px;color:#333;right:167px;text-align:right;transform:scaleX(0.92);transform-origin:100% 50%;">52,754.40</div>
<div class="t" style="top:267px;height:10px;line-height:10px;font-size:6.25px;color:#9a9a9a;right:132.2px;text-align:right;transform:scaleX(0.92);transform-origin:100% 50%;">0.00</div>
<div class="t" style="top:267px;height:10px;line-height:10px;font-size:6.25px;color:#9a9a9a;right:78.2px;text-align:right;transform:scaleX(0.92);transform-origin:100% 50%;">0.00%</div>
<div style="left:739.6px;top:267.738px;width:23.8px;height:5.4px;background:#e7ba55"></div>
<div style="left:763px;top:266.938px;width:0.8px;height:7px;background:#8c7a45"></div>
<div class="panel" style="left:177px;top:310px;width:618.7px;height:145.3px;"></div>
<div class="t" style="top:315px;height:10px;line-height:10px;font-size:6.25px;color:#7a7a7a;left:181px;transform:scaleX(0.94);transform-origin:0 50%;">Employee-Details (click on table to see all details)</div>
<div style="left:182px;top:330.4px;width:116.5px;height:15.2px;background:#fff;border:0.6px solid #efefef;box-sizing:border-box;"></div>
<div class="t" style="top:335px;height:10px;line-height:10px;font-size:6.25px;color:#333;left:186px;transform:scaleX(0.92);transform-origin:0 50%;">Achatz, Leif (10019)</div>
<svg style="left:289.3px;top:337.1px" width="3.4" height="2.2" viewBox="0 0 34 22"><path d="M0 0 H34 L17 22 Z" fill="#333"/></svg>
<div class="t" style="top:349px;height:10px;line-height:10px;font-size:6.25px;color:#333;left:182px;transform:scaleX(0.92);transform-origin:0 50%;">Comment</div>
<div style="left:182px;top:357.5px;width:116.5px;height:92.5px;background:#fff;border:0.6px solid #e8e8e8;box-sizing:border-box;"></div>
<div style="left:301.2px;top:359.36px;width:489.6px;height:0.6px;background:#e9e9e9"></div>
<div style="left:301.2px;top:359.66px;width:489.6px;height:14.46px;background:#f4f4f4"></div>
<div style="left:301.2px;top:373.82px;width:489.6px;height:0.6px;background:#e9e9e9"></div>
<div style="left:301.2px;top:388.28px;width:489.6px;height:0.6px;background:#e9e9e9"></div>
<div style="left:301.2px;top:388.58px;width:489.6px;height:14.46px;background:#f4f4f4"></div>
<div style="left:301.2px;top:402.74px;width:489.6px;height:0.6px;background:#e9e9e9"></div>
<div style="left:301.2px;top:417.2px;width:489.6px;height:0.6px;background:#e9e9e9"></div>
<div style="left:301.2px;top:344.8px;width:489.6px;height:0.8px;background:#d9d9d9"></div>
<div style="left:383.15px;top:330.6px;width:0.7px;height:119.4px;background:#e8e8e8"></div>
<div style="left:468.25px;top:330.6px;width:0.7px;height:119.4px;background:#e8e8e8"></div>
<div style="left:589.15px;top:330.6px;width:0.7px;height:119.4px;background:#e8e8e8"></div>
<div style="left:674.05px;top:330.6px;width:0.7px;height:119.4px;background:#e8e8e8"></div>
<div class="t" style="top:334px;height:10px;line-height:10px;font-size:6.25px;color:#7a7a7a;left:304.2px;transform:scaleX(0.92);transform-origin:0 50%;">From</div>
<div class="t" style="top:334px;height:10px;line-height:10px;font-size:6.25px;color:#7a7a7a;right:334.2px;text-align:right;transform:scaleX(0.92);transform-origin:100% 50%;">FTE (gross)</div>
<div class="t" style="top:334px;height:10px;line-height:10px;font-size:6.25px;color:#7a7a7a;right:213.7px;text-align:right;transform:scaleX(0.92);transform-origin:100% 50%;">Contracted salary</div>
<div class="t" style="top:334px;height:10px;line-height:10px;font-size:6.25px;color:#7a7a7a;right:128.6px;text-align:right;transform:scaleX(0.92);transform-origin:100% 50%;">Increase %</div>
<div class="t" style="top:334px;height:10px;line-height:10px;font-size:6.25px;color:#7a7a7a;right:12.3px;text-align:right;transform:scaleX(0.92);transform-origin:100% 50%;">Increase amount</div>
<div class="t" style="top:349px;height:10px;line-height:10px;font-size:6.25px;color:#333;left:304.2px;transform:scaleX(0.92);transform-origin:0 50%;">January 2025</div>
<div class="t" style="top:349px;height:10px;line-height:10px;font-size:6.25px;color:#333;right:334.2px;text-align:right;transform:scaleX(0.92);transform-origin:100% 50%;">1.00</div>
<div class="t" style="top:349px;height:10px;line-height:10px;font-size:6.25px;color:#333;right:213.7px;text-align:right;transform:scaleX(0.92);transform-origin:100% 50%;">6,800.00</div>
<div class="t" style="top:363px;height:10px;line-height:10px;font-size:6.25px;color:#333;left:304.2px;transform:scaleX(0.92);transform-origin:0 50%;">January 2024</div>
<div class="t" style="top:363px;height:10px;line-height:10px;font-size:6.25px;color:#333;right:334.2px;text-align:right;transform:scaleX(0.92);transform-origin:100% 50%;">1.00</div>
<div class="t" style="top:363px;height:10px;line-height:10px;font-size:6.25px;color:#333;right:213.7px;text-align:right;transform:scaleX(0.92);transform-origin:100% 50%;">6,800.00</div>
<div class="t" style="top:363px;height:10px;line-height:10px;font-size:6.25px;color:#333;right:128.6px;text-align:right;transform:scaleX(0.92);transform-origin:100% 50%;">4.62%</div>
<div class="t" style="top:363px;height:10px;line-height:10px;font-size:6.25px;color:#333;right:12.3px;text-align:right;transform:scaleX(0.92);transform-origin:100% 50%;">300.00</div>
<div class="t" style="top:378px;height:10px;line-height:10px;font-size:6.25px;color:#333;left:304.2px;transform:scaleX(0.92);transform-origin:0 50%;">July 2023</div>
<div class="t" style="top:378px;height:10px;line-height:10px;font-size:6.25px;color:#333;right:334.2px;text-align:right;transform:scaleX(0.92);transform-origin:100% 50%;">1.00</div>
<div class="t" style="top:378px;height:10px;line-height:10px;font-size:6.25px;color:#333;right:213.7px;text-align:right;transform:scaleX(0.92);transform-origin:100% 50%;">6,500.00</div>
<div class="t" style="top:378px;height:10px;line-height:10px;font-size:6.25px;color:#333;right:128.6px;text-align:right;transform:scaleX(0.92);transform-origin:100% 50%;">1.72%</div>
<div class="t" style="top:378px;height:10px;line-height:10px;font-size:6.25px;color:#333;right:12.3px;text-align:right;transform:scaleX(0.92);transform-origin:100% 50%;">110.00</div>
<div class="t" style="top:392px;height:10px;line-height:10px;font-size:6.25px;color:#333;left:304.2px;transform:scaleX(0.92);transform-origin:0 50%;">January 2023</div>
<div class="t" style="top:392px;height:10px;line-height:10px;font-size:6.25px;color:#333;right:334.2px;text-align:right;transform:scaleX(0.92);transform-origin:100% 50%;">1.00</div>
<div class="t" style="top:392px;height:10px;line-height:10px;font-size:6.25px;color:#333;right:213.7px;text-align:right;transform:scaleX(0.92);transform-origin:100% 50%;">6,390.00</div>
<div class="t" style="top:392px;height:10px;line-height:10px;font-size:6.25px;color:#333;right:128.6px;text-align:right;transform:scaleX(0.92);transform-origin:100% 50%;">3.06%</div>
<div class="t" style="top:392px;height:10px;line-height:10px;font-size:6.25px;color:#333;right:12.3px;text-align:right;transform:scaleX(0.92);transform-origin:100% 50%;">190.00</div>
<div class="t" style="top:407px;height:10px;line-height:10px;font-size:6.25px;color:#333;left:304.2px;transform:scaleX(0.92);transform-origin:0 50%;">January 2022</div>
<div class="t" style="top:407px;height:10px;line-height:10px;font-size:6.25px;color:#333;right:334.2px;text-align:right;transform:scaleX(0.92);transform-origin:100% 50%;">1.00</div>
<div class="t" style="top:407px;height:10px;line-height:10px;font-size:6.25px;color:#333;right:213.7px;text-align:right;transform:scaleX(0.92);transform-origin:100% 50%;">6,200.00</div>
<div style="left:797.5px;top:0px;width:2.5px;height:457px;background:#ececec"></div>
</div></body></html>
